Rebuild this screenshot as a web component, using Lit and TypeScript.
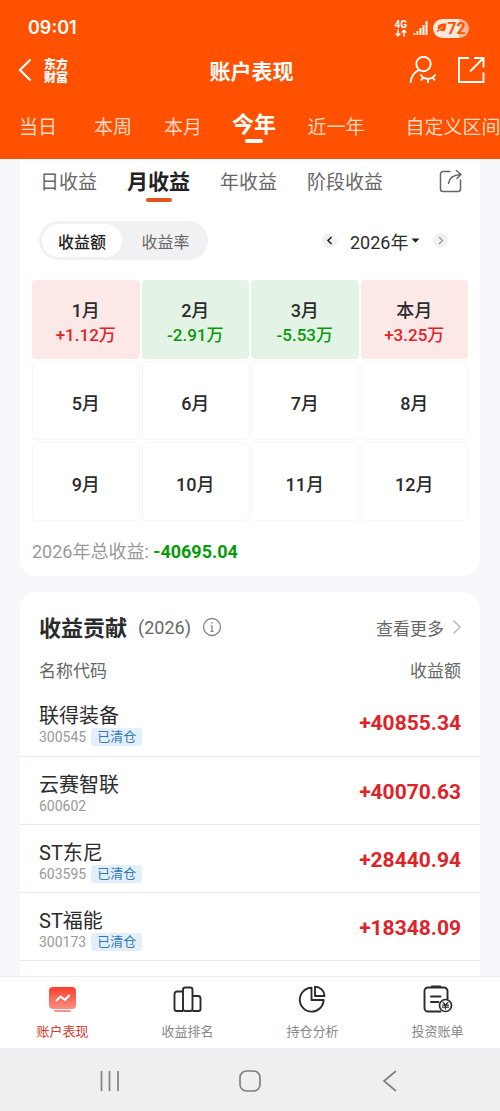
import { LitElement, html, css, svg, nothing } from "lit";
import { customElement, state } from "lit/decorators.js";
import { classMap } from "lit/directives/class-map.js";

interface Month {
  label: string;
  value?: string;
}

interface Holding {
  name: string;
  code: string;
  closed: boolean;
  profit: string;
}

const PERIODS = ["当日", "本周", "本月", "今年", "近一年", "自定义区间"];
const VIEWS = ["日收益", "月收益", "年收益", "阶段收益"];
const MONTHS: Month[] = [
  { label: "1月", value: "+1.12万" },
  { label: "2月", value: "-2.91万" },
  { label: "3月", value: "-5.53万" },
  { label: "本月", value: "+3.25万" },
  { label: "5月" },
  { label: "6月" },
  { label: "7月" },
  { label: "8月" },
  { label: "9月" },
  { label: "10月" },
  { label: "11月" },
  { label: "12月" },
];
const HOLDINGS: Holding[] = [
  { name: "联得装备", code: "300545", closed: true, profit: "+40855.34" },
  { name: "云赛智联", code: "600602", closed: false, profit: "+40070.63" },
  { name: "ST东尼", code: "603595", closed: true, profit: "+28440.94" },
  { name: "ST福能", code: "300173", closed: true, profit: "+18348.09" },
];

const performanceIcon = svg`
  <defs>
    <linearGradient id="screen" x1="0" y1="0" x2="0" y2="1">
      <stop offset="0" stop-color="#fb3f2c"/><stop offset="1" stop-color="#fb8f80"/>
    </linearGradient>
  </defs>
  <rect x="1" y="2" width="27" height="22" rx="4" fill="url(#screen)"/>
  <path d="M8.500 15.500l4-4 4.500 3.500 4-4.500" fill="none" stroke="#fff" stroke-width="2" stroke-linecap="round" stroke-linejoin="round"/>
  <rect x="6" y="25" width="17" height="2" rx="1" fill="#fb9385"/>`;

const rankIcon = svg`
  <g fill="none" stroke="#2b2b2d" stroke-width="1.900" stroke-linejoin="round">
    <path d="M10 6.500H4a2.500 2.500 0 0 0-2.500 2.500v15A2 2 0 0 0 3.500 26H10"/>
    <rect x="10" y="2.500" width="9.500" height="23.500" rx="2.200"/>
    <path d="M19.500 11H25a2.500 2.500 0 0 1 2.500 2.500V24a2 2 0 0 1-2 2h-6"/>
  </g>`;

const pieIcon = svg`
  <g fill="none" stroke="#2b2b2d" stroke-width="1.900" stroke-linejoin="round">
    <path d="M13.500 2.800A11.900 11.900 0 1 0 25.600 15H13.500z"/>
    <path d="M17 1.700V11h9.500A9.500 9.500 0 0 0 17 1.700z"/>
  </g>`;

const billIcon = svg`
  <g fill="none" stroke="#2b2b2d" stroke-width="1.900" stroke-linecap="round" stroke-linejoin="round">
    <path d="M17.500 26.500H5a3.500 3.500 0 0 1-3.500-3.500V6A3.500 3.500 0 0 1 5 2.500h16A3.500 3.500 0 0 1 24.500 6v8"/>
    <path d="M9 1.800h8" stroke-width="2.400"/>
    <path d="M8 11.500h9.500M8 17h7.500"/>
    <circle cx="22.500" cy="20.500" r="6" stroke-width="1.700"/>
    <path d="M20 17.300l2.500 2.700 2.500-2.700M19.500 20.200h6M19.500 22.200h6M22.500 20v4" stroke-width="1.200"/>
  </g>`;

const NAV = [
  { label: "账户表现", icon: performanceIcon },
  { label: "收益排名", icon: rankIcon },
  { label: "持仓分析", icon: pieIcon },
  { label: "投资账单", icon: billIcon },
];

@customElement("app-root")
export class AppRoot extends LitElement {
  static styles = css`
    :host {
      display: flex;
      flex-direction: column;
      height: 100vh;
      overflow: hidden;
      background: #f6f7fa;
      color: #2b2b2d;
      font-family: Roboto, "Noto Sans CJK SC", sans-serif;
    }
    * {
      box-sizing: border-box;
    }
    svg {
      display: block;
    }
    button,
    select {
      margin: 0;
      padding: 0;
      border: 0;
      background: none;
      color: inherit;
      font: inherit;
      cursor: pointer;
    }
    a {
      color: inherit;
      text-decoration: none;
    }
    h1,
    h2,
    p {
      margin: 0;
    }

    .header {
      flex: none;
      background: #ff5100;
      color: #fff;
    }
    .status {
      display: flex;
      align-items: center;
      justify-content: space-between;
      height: 54px;
      padding: 2px 31px 0 28px;
    }
    .clock {
      font: 600 18px/24px Inter, Roboto, sans-serif;
    }
    .signals {
      display: flex;
      align-items: center;
      gap: 6px;
    }
    .network {
      display: flex;
      flex-direction: column;
      align-items: center;
      font-size: 10px;
      font-weight: 700;
      line-height: 9px;
    }
    .battery {
      display: flex;
      align-items: center;
      justify-content: center;
      width: 36px;
      height: 19px;
      border-radius: 10px;
      background: linear-gradient(90deg, #ffe9df 72%, #ffb999 72%);
      color: #ff5100;
      font-size: 16px;
      font-weight: 700;
    }
    .bars {
      margin-right: -1px;
    }
    .titlebar {
      display: grid;
      grid-template-columns: 1fr auto 1fr;
      align-items: center;
      height: 32px;
      padding: 0 15px 0 18px;
    }
    .brand {
      display: flex;
      align-items: center;
      gap: 12px;
    }
    .logo {
      width: 24px;
      font: 900 12px/13px "Noto Sans CJK SC", sans-serif;
    }
    .title {
      font-size: 21px;
      font-weight: 700;
      line-height: 28px;
      padding-top: 3px;
    }
    .actions {
      display: flex;
      justify-content: flex-end;
      gap: 20px;
    }
    .periods {
      display: grid;
      grid-template-columns: 76px 74px 66px 76px 88px 146px;
      height: 73px;
      overflow: hidden;
    }
    .period {
      position: relative;
      height: 73px;
      padding-top: 6px;
      padding-bottom: 1px;
      color: #ffd9c2;
      font-size: 19px;
      white-space: nowrap;
    }
    .period.on {
      padding-top: 2px;
      padding-bottom: 3px;
      color: #fff;
      font-size: 22px;
      font-weight: 700;
    }
    .period.on::after {
      content: "";
      position: absolute;
      left: 50%;
      top: 53px;
      width: 18px;
      height: 4px;
      margin-left: -9px;
      border-radius: 2px;
      background: #fff;
    }

    .content {
      flex: 1;
      display: flex;
      flex-direction: column;
      gap: 16px;
      min-height: 0;
      overflow: hidden;
      padding: 0 20px;
    }
    .card {
      flex: none;
      background: #fff;
    }
    .calendar {
      border-radius: 0 0 16px 16px;
      padding: 0 12px 10px;
    }
    .views {
      display: flex;
      align-items: center;
      gap: 30px;
      height: 46px;
      padding: 0 6px 0 8px;
    }
    .view {
      position: relative;
      height: 46px;
      padding-bottom: 3px;
      color: #666;
      font-size: 19px;
      white-space: nowrap;
    }
    .view.on {
      padding-bottom: 4px;
      color: #222;
      font-size: 21px;
      font-weight: 700;
    }
    .view.on::after {
      content: "";
      position: absolute;
      left: 50%;
      bottom: 3px;
      width: 26px;
      height: 4px;
      margin-left: -13px;
      border-radius: 2px;
      background: #e0551a;
    }
    .share {
      margin-left: auto;
      padding-bottom: 2px;
    }
    .controls {
      display: flex;
      align-items: center;
      justify-content: space-between;
      margin: 16px 0 20px;
      padding: 0 20px 0 7px;
    }
    .toggle {
      display: flex;
      padding: 3px;
      border-radius: 20px;
      background: #f1f1f4;
    }
    .mode {
      width: 80px;
      height: 33px;
      border-radius: 17px;
      color: #666;
      font-size: 16px;
    }
    .mode + .mode {
      width: 83px;
      padding-left: 4px;
    }
    .mode.on {
      background: #fff;
      color: #222;
      font-weight: 500;
    }
    .year {
      display: flex;
      align-items: center;
      gap: 13px;
    }
    .step {
      display: grid;
      place-items: center;
      width: 15px;
      height: 15px;
      border-radius: 50%;
      background: #f1f1f2;
    }
    .picker {
      display: grid;
      align-items: center;
      width: 70px;
    }
    .picker > * {
      grid-area: 1 / 1;
    }
    .picker svg {
      justify-self: end;
      pointer-events: none;
    }
    .years {
      appearance: none;
      width: 100%;
      height: 28px;
      padding-top: 4px;
      font-size: 18px;
    }
    .months {
      display: grid;
      grid-template-columns: repeat(4, 1fr);
      grid-auto-rows: 79px;
      gap: 2px;
    }
    .month {
      display: flex;
      flex-direction: column;
      align-items: center;
      justify-content: center;
      border: 1px solid #f7f7f8;
      border-radius: 4px;
      font-size: 18px;
      font-weight: 500;
      line-height: 24px;
      padding-top: 6px;
    }
    .amount {
      font-size: 17px;
    }
    .month.up {
      border-color: #fde8e8;
      background: #fde8e8;
    }
    .month.down {
      border-color: #e3f4e6;
      background: #e3f4e6;
    }
    .up .amount {
      color: #de2429;
    }
    .down .amount {
      color: #099a0a;
    }
    .total {
      padding-top: 17px;
      color: #999;
      font-size: 18px;
      line-height: 28px;
    }
    .total strong {
      color: #099a0a;
      font-weight: 700;
    }

    .contribution {
      flex: 1 0 auto;
      border-radius: 16px 16px 0 0;
      padding-top: 20px;
    }
    .heading {
      display: flex;
      align-items: center;
      padding: 0 18px 0 19px;
      height: 34px;
    }
    .heading h2 {
      font-size: 22px;
      font-weight: 700;
      line-height: 34px;
    }
    .scope {
      margin: 0 11px;
      padding-bottom: 4px;
      color: #666;
      font-size: 18px;
    }
    .hint {
      padding-bottom: 4px;
    }
    .more {
      display: flex;
      align-items: center;
      gap: 8px;
      margin-left: auto;
      padding-bottom: 4px;
      color: #666;
      font-size: 17px;
    }
    .holdings {
      width: 100%;
      border-collapse: collapse;
    }
    .holdings th {
      height: 42px;
      padding: 4px 19px 0;
      color: #666;
      font-size: 17px;
      font-weight: 400;
      text-align: left;
      vertical-align: middle;
    }
    .holdings td {
      height: 68px;
      padding: 3px 19px 0;
      border-bottom: 1px solid #ececee;
      vertical-align: middle;
    }
    .holdings .profit {
      text-align: right;
    }
    td.profit {
      color: #de2429;
      font-size: 21px;
      font-weight: 700;
    }
    .name {
      display: block;
      padding-top: 4px;
      font-size: 20px;
      line-height: 24px;
    }
    .meta {
      display: flex;
      align-items: center;
      gap: 5px;
      height: 18px;
      color: #999;
      font-size: 14px;
    }
    .badge {
      padding: 0 6px;
      border-radius: 3px;
      background: #e3f0fb;
      color: #3079b8;
      font-size: 13px;
      line-height: 18px;
    }

    .nav {
      flex: none;
      display: grid;
      grid-template-columns: repeat(4, 1fr);
      height: 72px;
      border-top: 1px solid #eeeef0;
      background: #fff;
    }
    .item {
      display: flex;
      flex-direction: column;
      align-items: center;
      gap: 9px;
      padding-top: 8px;
      color: #888;
      font-size: 13px;
      line-height: 20px;
    }
    .item.on {
      color: #d93a2b;
    }
    .system {
      flex: none;
      display: flex;
      align-items: center;
      justify-content: space-between;
      height: 63px;
      padding: 2px 99px 0 98px;
      background: #efeff1;
    }
  `;

  @state() private period = "今年";
  @state() private view = "月收益";
  @state() private mode = "收益额";
  @state() private section = "账户表现";

  private renderHeader() {
    return html`
      <header class="header">
        <div class="status">
          <span class="clock">09:01</span>
          <div class="signals">
            <div class="network">
              <span>4G</span>
              <svg width="12" height="8" viewBox="0 0 12 8" fill="none" stroke="#fff" stroke-width="1.500">
                <path d="M3 .500v6M.700 4.500L3 6.800l2.300-2.300M9 7.500v-6M6.700 3.500L9 1.200l2.300 2.300" />
              </svg>
            </div>
            <svg class="bars" width="15" height="14" viewBox="0 0 15 14" fill="#fff">
              <path d="M.500 12h1.800v2H.500zM3.500 10h1.800v4H3.500zM6.500 7h2v7h-2zM9.500 4h2v10h-2zM12.500 0h2v14h-2z" />
            </svg>
            <div class="battery">
              <svg width="11" height="10" viewBox="0 0 11 10" fill="#ff5100">
                <path d="M10.500.500C7 .500 2 .800 1.800 4.500c0 .900.200 1.400.500 1.900L.500 8.500l.800.700L3.200 7.500l5 .700C9.800 7 9.800 4 10.500.500z" />
                <path d="M3 7l4-3.500" stroke="#ffe9df" stroke-width=".8" />
              </svg>
              <span>72</span>
            </div>
          </div>
        </div>
        <div class="titlebar">
          <div class="brand">
            <button aria-label="返回">
              <svg width="14" height="24" viewBox="0 0 14 24" fill="none" stroke="#fff" stroke-width="2.200">
                <path d="M12.500 1.500L2 12l10.500 10.500" />
              </svg>
            </button>
            <span class="logo">东方财富</span>
          </div>
          <h1 class="title">账户表现</h1>
          <div class="actions">
            <button aria-label="隐私">
              <svg width="28" height="28" viewBox="0 0 28 28" fill="none" stroke="#fff" stroke-width="1.900">
                <circle cx="14.500" cy="8" r="7.200" />
                <path d="M10.200 13.800C5 16 2 20.500 1.500 27" />
                <path d="M11.500 18.500c2 3.200 4.500 4.300 7.500 4.300s5.500-1.300 7.500-4.300M14 21.500l-2 3M19 22.800V27M23.800 21.500l2 3" />
              </svg>
            </button>
            <button aria-label="分享">
              <svg width="28" height="28" viewBox="0 0 28 28" fill="none" stroke="#fff" stroke-width="1.900">
                <path d="M12 2H2v24h24.500V16.500" />
                <path d="M17 2h9.500v9.500M26.500 2L13 15.500" />
              </svg>
            </button>
          </div>
        </div>
        <nav class="periods">
          ${PERIODS.map(
            (p) => html`<button
              class=${classMap({ period: true, on: p === this.period })}
              @click=${() => (this.period = p)}
            >${p}</button>`
          )}
        </nav>
      </header>
    `;
  }

  private renderCalendar() {
    return html`
      <section class="card calendar">
        <div class="views">
          ${VIEWS.map(
            (v) => html`<button
              class=${classMap({ view: true, on: v === this.view })}
              @click=${() => (this.view = v)}
            >${v}</button>`
          )}
          <button class="share" aria-label="分享收益">
            <svg width="23" height="24" viewBox="0 0 23 24" fill="none" stroke="#666" stroke-width="1.500" stroke-linecap="round" stroke-linejoin="round">
              <path d="M11 2.500H4A2.500 2.500 0 0 0 1.500 5v15A2.500 2.500 0 0 0 4 22.500h15a2.500 2.500 0 0 0 2.500-2.500v-9" />
              <path d="M9.500 14.500C10 9.500 13.500 6 21.500 5.500M17.500 1.500l4.500 4-4 4" />
            </svg>
          </button>
        </div>
        <div class="controls">
          <div class="toggle">
            ${["收益额", "收益率"].map(
              (m) => html`<button
                class=${classMap({ mode: true, on: m === this.mode })}
                @click=${() => (this.mode = m)}
              >${m}</button>`
            )}
          </div>
          <div class="year">
            <button class="step" aria-label="上一年">
              <svg width="7" height="9" viewBox="0 0 7 9" fill="none" stroke="#222" stroke-width="1.600"><path d="M5.500 1L2 4.500 5.500 8" /></svg>
            </button>
            <label class="picker">
              <select class="years" aria-label="年份"><option>2026年</option><option>2025年</option></select>
              <svg width="9" height="5" viewBox="0 0 9 5" fill="#222"><path d="M.500.500h8L4.500 4.800z" /></svg>
            </label>
            <button class="step" aria-label="下一年">
              <svg width="7" height="9" viewBox="0 0 7 9" fill="none" stroke="#999" stroke-width="1.400"><path d="M2 1l3.500 3.500L2 8" /></svg>
            </button>
          </div>
        </div>
        <div class="months">
          ${MONTHS.map(
            (m) => html`<div
              class=${classMap({
                month: true,
                up: !!m.value?.startsWith("+"),
                down: !!m.value?.startsWith("-"),
              })}
            >
              <span>${m.label}</span>
              ${m.value ? html`<span class="amount">${m.value}</span>` : nothing}
            </div>`
          )}
        </div>
        <p class="total">2026年总收益: <strong>-40695.04</strong></p>
      </section>
    `;
  }

  private renderContribution() {
    return html`
      <section class="card contribution">
        <div class="heading">
          <h2>收益贡献</h2>
          <span class="scope">(2026)</span>
          <button class="hint" aria-label="说明">
            <svg width="20" height="20" viewBox="0 0 20 20" fill="none" stroke="#888" stroke-width="1.300">
              <circle cx="10" cy="10" r="8.500" />
              <path d="M10 8.500v6M8.700 9H10M8.500 14.300h3M10 5v1.700" />
            </svg>
          </button>
          <a class="more" href="#more">
            查看更多
            <svg width="10" height="16" viewBox="0 0 10 16" fill="none" stroke="#bbb" stroke-width="1.500"><path d="M1.500 1.500L8 8l-6.500 6.500" /></svg>
          </a>
        </div>
        <table class="holdings">
          <thead>
            <tr><th>名称代码</th><th class="profit">收益额</th></tr>
          </thead>
          <tbody>
            ${HOLDINGS.map(
              (h) => html`<tr>
                <td>
                  <span class="name">${h.name}</span>
                  <span class="meta">${h.code}${h.closed ? html`<span class="badge">已清仓</span>` : nothing}</span>
                </td>
                <td class="profit">${h.profit}</td>
              </tr>`
            )}
          </tbody>
        </table>
      </section>
    `;
  }

  render() {
    return html`
      ${this.renderHeader()}
      <main class="content">${this.renderCalendar()}${this.renderContribution()}</main>
      <nav class="nav">
        ${NAV.map(
          (n) => html`<button
            class=${classMap({ item: true, on: n.label === this.section })}
            @click=${() => (this.section = n.label)}
          >
            <svg width="30" height="28" viewBox="0 0 30 28">${n.icon}</svg>
            <span>${n.label}</span>
          </button>`
        )}
      </nav>
      <footer class="system">
        <button aria-label="最近任务">
          <svg width="22" height="22" viewBox="0 0 22 22" stroke="#808084" stroke-width="1.700"><path d="M3.500 1v20M11.500 1v20M20 1v20" /></svg>
        </button>
        <button aria-label="主屏幕">
          <svg width="22" height="22" viewBox="0 0 22 22" fill="none" stroke="#808084" stroke-width="1.700"><rect x="1" y="1" width="20" height="20" rx="6.500" /></svg>
        </button>
        <button aria-label="后退">
          <svg width="22" height="22" viewBox="0 0 22 22" fill="none" stroke="#808084" stroke-width="1.700"><path d="M17 1L5 11l12 10" /></svg>
        </button>
      </footer>
    `;
  }
}
